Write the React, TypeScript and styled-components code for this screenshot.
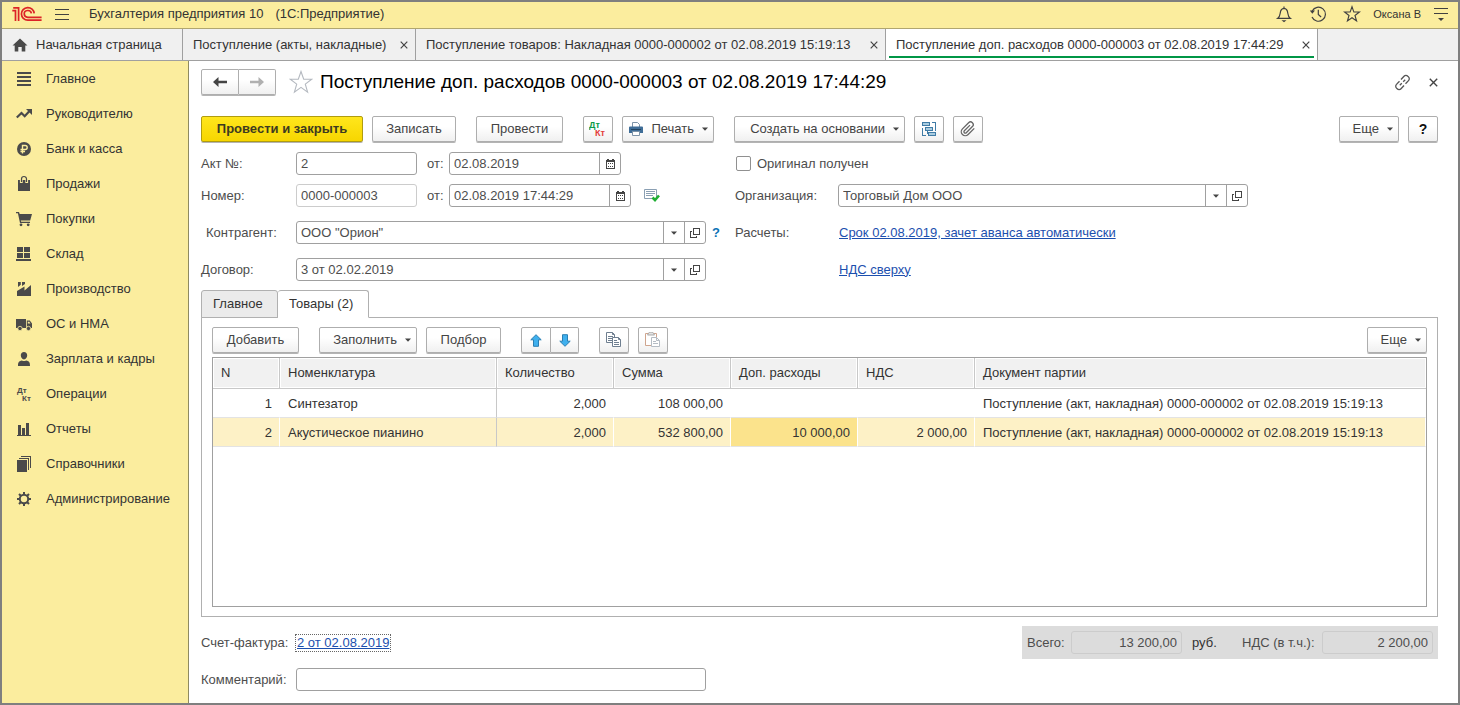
import React from 'react';
import styled, { createGlobalStyle, css } from 'styled-components';

const GlobalStyle = createGlobalStyle`
  *, *::before, *::after { box-sizing: border-box; }
  body {
    margin: 0;
    background: #fff;
    color: #333;
    font-family: 'Liberation Sans', Arial, sans-serif;
    font-size: 13px;
    line-height: 16px;
  }
  button, input { font: inherit; color: inherit; }
  svg { display: block; flex: none; }
`;

/* ---------- window frame ---------- */

const Window = styled.div`
  display: flex;
  flex-direction: column;
  min-height: 100vh;
  border: 2px solid #7f7f7f;
`;

const TitleBar = styled.header`
  display: flex;
  align-items: center;
  height: 27px;
  padding: 0 9px 2px 10px;
  background: #fbed9e;
  border-bottom: 1px solid #b0a670;
`;

const IconButton = styled.button`
  display: inline-flex;
  align-items: center;
  justify-content: center;
  flex: none;
  padding: 0;
  border: 0;
  background: transparent;
  color: #404040;
  cursor: pointer;
`;

const BurgerButton = styled(IconButton)`
  margin-left: 13px;
`;

const FavouriteButton = styled(IconButton)`
  margin-left: 13px;
`;

const AppTitle = styled.div`
  display: flex;
  gap: 12px;
  margin-left: 20px;
  flex: 1;
  white-space: nowrap;
`;

const TitleTools = styled.div`
  display: flex;
  align-items: center;
  gap: 16px;
`;

const UserLink = styled.button`
  margin-left: -4px;
  padding: 0;
  border: 0;
  background: transparent;
  font-size: 11px;
  white-space: nowrap;
`;

const MenuToggle = styled(IconButton)`
  margin-left: 12px;
`;

const TabStrip = styled.nav`
  display: flex;
  height: 32px;
  background: #f0f0f0;
  border-bottom: 1px solid #a0a0a0;
`;

const WindowTab = styled.div<{ $basis: number; $active?: boolean }>`
  display: flex;
  align-items: center;
  flex: 0 1 ${p => p.$basis}px;
  min-width: 0;
  position: relative;
  padding: 0 7px 0 10px;
  border-right: 1px solid #a0a0a0;
  background: ${p => (p.$active ? '#fff' : '#f0f0f0')};
  ${p =>
    p.$active &&
    css`
      &::after {
        content: '';
        position: absolute;
        left: 3px;
        right: 3px;
        bottom: 2px;
        height: 2px;
        background: #009646;
      }
    `}
`;

const TabText = styled.button`
  display: flex;
  align-items: center;
  gap: 8px;
  flex: 1;
  min-width: 0;
  padding: 0;
  border: 0;
  background: transparent;
  text-align: left;
  white-space: nowrap;
  overflow: hidden;
`;

const Body = styled.div`
  display: flex;
  flex: 1;
`;

const Sidebar = styled.nav`
  flex: none;
  width: 187px;
  background: #fbed9e;
  border-right: 1px solid #8f8a60;
`;

const SectionList = styled.ul`
  margin: 0;
  padding: 0;
  list-style: none;
`;

const SectionLink = styled.a`
  display: flex;
  align-items: center;
  gap: 12px;
  height: 35px;
  padding-left: 14px;
  color: #333;
  text-decoration: none;
`;

/* ---------- document form ---------- */

const Main = styled.main`
  display: flex;
  flex-direction: column;
  flex: 1;
  min-width: 0;
  padding: 8px 20px 12px 12px;
  color: #4d4d4d;
`;

const Heading = styled.div`
  display: flex;
  align-items: center;
  height: 26px;
  margin-bottom: 21px;
`;

const DocTitle = styled.h1`
  flex: 1;
  margin: 0 0 0 7px;
  color: #000;
  font-size: 19px;
  line-height: 24px;
  font-weight: 400;
  white-space: nowrap;
`;

const HeadingTools = styled.div`
  display: flex;
  gap: 18px;
`;

const Button = styled.button<{ $width: number; $primary?: boolean }>`
  display: inline-flex;
  align-items: center;
  justify-content: center;
  gap: 8px;
  flex: none;
  width: ${p => p.$width}px;
  height: 26px;
  margin-bottom: 1px;
  padding: 0;
  border: 1px solid #aeaeae;
  border-radius: 2px;
  background: linear-gradient(#fff 40%, #f0f0f0);
  box-shadow: 0 1px 0 #b4b4b4;
  color: #444;
  white-space: nowrap;
  cursor: pointer;
  &:disabled { color: #b0b0b0; }
  ${p =>
    p.$primary &&
    css`
      border-color: #b09c10;
      background: linear-gradient(#ffe61c, #f7d600);
      color: #3d3a20;
      font-weight: 700;
    `}
`;

const DropButton = styled(Button)`
  justify-content: flex-end;
  padding-right: 5px;
`;

const HelpButton = styled(Button)`
  color: #111;
  font-size: 14px;
  font-weight: 700;
`;

const Joined = styled.div`
  display: flex;
  & > button:first-child { border-radius: 2px 0 0 2px; }
  & > button:last-child { border-radius: 0 2px 2px 0; border-left: 0; }
`;

const Toolbar = styled.div`
  display: flex;
  gap: 9px;
`;

const ToolGroup = styled.div`
  display: flex;
  gap: 9px;
  margin-right: 11px;
  &:last-child { margin: 0 0 0 auto; }
`;

const Form = styled.div`
  display: grid;
  grid-template-columns: minmax(0, 534px) minmax(0, 513px);
  row-gap: 9px;
  margin: 9px 0;
`;

const FormRow = styled.div<{ $spaced?: boolean }>`
  display: flex;
  align-items: center;
  height: 23px;
  margin-top: ${p => (p.$spaced ? 5 : 0)}px;
`;

const Label = styled.label<{ $width: number; $indent?: boolean }>`
  flex: none;
  width: ${p => p.$width}px;
  padding-left: ${p => (p.$indent ? 5 : 0)}px;
  white-space: nowrap;
`;

const FieldBox = styled.div<{ $width: number; $muted?: boolean }>`
  display: flex;
  flex: 0 1 ${p => p.$width}px;
  min-width: 0;
  height: 23px;
  border: 1px solid ${p => (p.$muted ? '#cccccc' : '#a0a0a0')};
  border-radius: 3px;
  overflow: hidden;
`;

const TextInput = styled.input`
  flex: 1;
  width: 0;
  min-width: 0;
  height: 100%;
  padding: 0 4px;
  border: 0;
  outline: 0;
  background: transparent;
`;

const FieldButton = styled(IconButton)`
  width: 21px;
  border-left: 1px solid #a0a0a0;
`;

const DateLabel = styled(Label)`
  margin-left: 10px;
`;

const Note = styled.span`
  margin-left: 13px;
`;

const Hint = styled.button`
  margin-left: 6px;
  padding: 0;
  border: 0;
  background: transparent;
  color: #0b72b5;
  font-weight: 700;
`;

const Link = styled.a<{ $focused?: boolean }>`
  padding: 0 1px;
  color: #1c4fae;
  white-space: nowrap;
  outline: ${p => (p.$focused ? '1px dotted #666' : 'none')};
`;

const CheckLabel = styled.label`
  display: flex;
  align-items: center;
  gap: 6px;
  padding-left: 1px;
`;

const Checkbox = styled.input`
  appearance: none;
  width: 15px;
  height: 15px;
  margin: 0;
  border: 1px solid #909090;
  border-radius: 2px;
  background: #fff;
`;

/* ---------- tabbed table part ---------- */

const PageTabs = styled.div`
  display: flex;
  height: 28px;
  position: relative;
  z-index: 1;
  margin-bottom: -1px;
`;

const PageTab = styled.button<{ $width: number; $active?: boolean }>`
  width: ${p => p.$width}px;
  padding: 0 11px;
  border: 1px solid #b0b0b0;
  border-left-width: ${p => (p.$active ? 0 : 1)}px;
  border-bottom-color: ${p => (p.$active ? '#fff' : '#b0b0b0')};
  border-radius: 3px 3px 0 0;
  background: ${p => (p.$active ? '#fff' : '#ebebeb')};
  color: #333;
  text-align: left;
  white-space: nowrap;
`;

const Panel = styled.section`
  display: flex;
  flex-direction: column;
  flex: 1;
  padding: 9px 10px;
  border: 1px solid #b0b0b0;
`;

const TableFrame = styled.div`
  flex: 1;
  min-height: 120px;
  margin-top: 3px;
  border: 1px solid #a0a0a0;
  overflow-x: auto;
`;

const Table = styled.table`
  width: 100%;
  table-layout: fixed;
  border-collapse: separate;
  border-spacing: 0;
  color: #333;
`;

const HeadCell = styled.th<{ $width?: number }>`
  width: ${p => (p.$width ? `${p.$width}px` : 'auto')};
  height: 31px;
  padding: 0 8px;
  border-right: 1px solid #c8c8c8;
  border-bottom: 1px solid #c8c8c8;
  background: #f1f1f1;
  box-shadow: inset 0 0 0 1px #fff;
  font-weight: 400;
  text-align: left;
  white-space: nowrap;
  &:last-child { border-right: 0; }
`;

const Cell = styled.td<{ $right?: boolean; $divider?: boolean; $current?: boolean }>`
  height: 29px;
  padding: 2px 7px 0 8px;
  border-right: 1px solid ${p => (p.$divider ? '#c8c8c8' : '#fff')};
  border-bottom: 1px solid #e3e3e3;
  text-align: ${p => (p.$right ? 'right' : 'left')};
  white-space: nowrap;
  overflow: hidden;
  background: ${p => (p.$current ? '#fbe38c' : 'transparent')};
`;

const Row = styled.tr<{ $selected?: boolean }>`
  background: ${p => (p.$selected ? '#fdf1c6' : '#fff')};
`;

/* ---------- footer ---------- */

const Footer = styled.footer`
  display: grid;
  row-gap: 9px;
  margin-top: 9px;
`;

const FooterRow = styled.div`
  display: flex;
  align-items: center;
`;

const Totals = styled.div`
  display: flex;
  align-items: center;
  flex: none;
  width: 416px;
  height: 33px;
  margin-left: auto;
  padding: 0 5px;
  background: #dcdcdc;
`;

const TotalInput = styled(TextInput)`
  text-align: right;
`;

const Currency = styled.span`
  flex: none;
  width: 60px;
  padding-left: 10px;
  color: #333;
`;

/* ---------- icons ---------- */

const Logo = () => (
  <svg width="30" height="16" viewBox="0 0 30 16" fill="none" stroke="#dc2327" strokeWidth="1.7">
    <path d="M.3 4.6h3.2V15M1.2 1.9h5.4V15" />
    <path d="M22.2 7.4A6.4 6.3 0 1 0 15.8 14.2H29.6" />
    <path d="M19.4 7.4A3.6 3.4 0 1 0 15.8 11.3H29.6" />
  </svg>
);

const Burger = () => (
  <svg width="14" height="11" viewBox="0 0 14 11" fill="#404040" shapeRendering="crispEdges">
    <path d="M0 0h14v1H0zM0 5h14v1H0zM0 10h14v1H0z" />
  </svg>
);

const Bell = () => (
  <svg width="18" height="18" viewBox="0 0 18 18" fill="none" stroke="#404040" strokeWidth="1.2">
    <path d="M2.6 13.4h12.8c-1.6-1.2-2.3-2.3-2.6-5.2C12.5 5.2 11.5 3.6 9 3.4 6.5 3.6 5.5 5.2 5.2 8.2 4.9 11.1 4.2 12.2 2.6 13.4zM9 1.6v1.8" />
    <path d="M6.5 15.2h5L9 17.2z" fill="#404040" stroke="none" />
  </svg>
);

const History = () => (
  <svg width="18" height="18" viewBox="0 0 18 18" fill="none" stroke="#404040" strokeWidth="1.2">
    <path d="M3.2 6A7 7 0 1 1 3 12M9.3 4.8v4.6l2.8 2.6" />
    <path d="M.8 5.6h5.2L3.3 8.8z" fill="#404040" stroke="none" />
  </svg>
);

const starPath = 'M12 1.5l2.7 7.7h8l-6.4 4.9 2.3 8L12 17.4l-6.6 4.7 2.3-8L1.3 9.2h8z';

const SmallStar = () => (
  <svg width="18" height="18" viewBox="-1 -1 26 26" fill="none" stroke="#404040" strokeWidth="1.6">
    <path d={starPath} />
  </svg>
);

const LargeStar = () => (
  <svg width="24" height="24" viewBox="0 0 24 24" fill="none" stroke="#b4b9c0" strokeWidth="1.1">
    <path d={starPath} />
  </svg>
);

const ServiceMenu = () => (
  <svg width="16" height="14" viewBox="0 0 16 14" fill="#404040" shapeRendering="crispEdges">
    <path d="M1 1h14v1H1zM1 6h14v1H1z" />
    <path d="M5 11h6l-3 3z" shapeRendering="auto" />
  </svg>
);

const Cross = ({ size = 8 }: { size?: number }) => (
  <svg width={size} height={size} viewBox="0 0 8 8" stroke="#444" strokeWidth="1.2">
    <path d="M.7.7l6.600 6.600M7.300.7L.7 7.300" />
  </svg>
);

const Home = () => (
  <svg width="16" height="14" viewBox="0 0 16 14" fill="#4a4a4a">
    <path d="M8 .5L15.5 7.5H13.3V13.5H9.700V9H6.300V13.5H2.700V7.5H.5z" />
  </svg>
);

const Arrow = ({ right }: { right?: boolean }) => (
  <svg width="14" height="12" viewBox="0 0 14 12" fill={right ? '#b0b0b0' : '#444'}>
    <path d={right ? 'M14 6L8.5 1v3.800H0v2.400h8.500V11z' : 'M0 6l5.500-5v3.800H14v2.400H5.500V11z'} />
  </svg>
);

const ChainLink = () => (
  <svg width="17" height="17" viewBox="0 0 17 17" fill="none" stroke="#555" strokeWidth="1.3">
    <path d="M7 5.500l3-3.300a2.600 2.600 0 0 1 3.800 0l.7.7a2.600 2.600 0 0 1 0 3.700L11.500 9.800" />
    <path d="M10 11.500l-3 3.300a2.600 2.600 0 0 1-3.800 0l-.7-.7a2.600 2.600 0 0 1 0-3.700L5.500 7.200" />
    <path d="M5.800 11.200l2-2M9.200 7.800l2-2" />
  </svg>
);

const Caret = () => (
  <svg width="6" height="4" viewBox="0 0 6 4" fill="#444">
    <path d="M0 .5h6L3 3.700z" />
  </svg>
);

const Calendar = () => (
  <svg width="9" height="10" viewBox="0 0 9 10" fill="#444" shapeRendering="crispEdges">
    <path d="M0 1h1V0h2v1h3V0h2v1h1v9H0zM1 3v6h7V3z" fillRule="evenodd" />
    <path d="M2 4h1v1H2zM4 4h1v1H4zM6 4h1v1H6zM2 7h1v1H2zM4 7h1v1H4zM6 7h1v1H6z" />
  </svg>
);

const OpenIcon = () => (
  <svg width="10" height="10" viewBox="0 0 10 10" fill="none" stroke="#444" shapeRendering="crispEdges">
    <path d="M3.500.5h6v6h-6zM2 3.500H.5v6h6V8" />
  </svg>
);

const DtKt = () => (
  <svg width="18" height="18" viewBox="0 0 18 18" fontFamily="Liberation Sans, sans-serif" fontWeight="700" fontSize="8" fill="#4a4a4a">
    <text x="1" y="8">Дт</text>
    <text x="6" y="16">Кт</text>
  </svg>
);

const DtKtColor = () => (
  <svg width="18" height="18" viewBox="0 0 18 18" fontFamily="Liberation Sans, sans-serif" fontWeight="700" fontSize="9">
    <text x="0" y="8" fill="#0a9a48">Дт</text>
    <text x="6" y="16" fill="#e33b3b">Кт</text>
  </svg>
);

const Printer = () => (
  <svg width="14" height="14" viewBox="0 0 14 14">
    <path d="M3.500 5V.5h5l2 2V5" fill="#fff" stroke="#7d93a8" />
    <path d="M1 4.500h12a1 1 0 0 1 1 1V11H0V5.500a1 1 0 0 1 1-1z" fill="#3f6d97" />
    <path d="M2 7.500h10" stroke="#23435f" />
    <path d="M3.500 9.500h7v4h-7z" fill="#fff" stroke="#7d93a8" />
  </svg>
);

const Structure = () => (
  <svg width="15" height="15" viewBox="0 0 15 15" fill="#a9cce0" stroke="#3f7ba6" shapeRendering="crispEdges">
    <path d="M.5.5h7v3h-7zM3.500 5.500h7v3h-7zM6.500 10.500h7v3h-7z" />
    <path d="M10 .5h3.500V9M.5 6v7.500H4M5.500 9v2.500H6" fill="none" />
  </svg>
);

const Clip = () => (
  <svg width="16" height="16" viewBox="0 0 24 24" fill="none" stroke="#666" strokeWidth="2">
    <path d="M21.400 11.100l-9.200 9.200a6 6 0 0 1-8.500-8.500l9.200-9.200a4 4 0 0 1 5.700 5.700l-9.200 9.200a2 2 0 0 1-2.900-2.900l8.500-8.400" />
  </svg>
);

const PostedIcon = () => (
  <svg width="16" height="13" viewBox="0 0 16 13" fill="none">
    <path d="M.5.5h12v9H.5z" fill="#fff" stroke="#8a9fb3" />
    <path d="M2 2.500h9M2 4.500h9M2 6.500h7" stroke="#8a9fb3" />
    <path d="M8.500 8.500l2.500 2.500 4-4.500" stroke="#1fae33" strokeWidth="2.600" />
  </svg>
);

const BlueArrow = ({ down }: { down?: boolean }) => (
  <svg width="12" height="13" viewBox="0 0 12 13" fill="#3fb0ee" stroke="#2b7fb3">
    <path d={down ? 'M6 12.300L.8 7.200h2.700V.7h5v6.500h2.700z' : 'M6 .7L.8 5.800h2.700v6.500h5V5.800h2.700z'} />
  </svg>
);

const CopyIcon = () => (
  <svg width="16" height="16" viewBox="0 0 16 16" fill="#fff" stroke="#6f7f90">
    <path d="M.5.5h6l2 2v8h-8zM6.500.5v2h2M2 4.500h5M2 6.500h5M2 8.500h5" />
    <path d="M6.500 5.500h6l2 2v7h-8zM12.500 5.500v2h2M8 8.500h3M8 10.500h5M8 12.500h5" />
  </svg>
);

const PasteIcon = () => (
  <svg width="16" height="16" viewBox="0 0 16 16" fill="#fff" stroke="#b5bcc4">
    <path d="M.5 1.500h11v12H.5z" stroke="#cfa58e" />
    <path d="M3.500 1.500a2.500 1.500 0 0 1 5 0l1 1.500h-7z" fill="#e3e3e3" stroke="#aaa" />
    <path d="M6.500 5.500h5l3 3v6h-8zM11.500 5.500v3h3M8 9.500h3M8 11.500h5" />
  </svg>
);

const sectionShapes: Record<string, React.ReactNode> = {
  main: <path d="M1 2h14v2H1zM1 6h14v2H1zM1 10h14v2H1zM1 14h14v2H1z" shapeRendering="crispEdges" />,
  trend: (
    <>
      <path d="M.8 12.500L5.500 8l3.200 3.200 4.800-5.200" fill="none" stroke="#4a4a4a" strokeWidth="2.200" />
      <path d="M10 4h6v6z" />
    </>
  ),
  bank: (
    <>
      <circle cx="8" cy="9" r="7" />
      <path d="M6.500 13.500V5.500h2.700a2 2 0 0 1 0 4H4.500M4.500 11.500H9" fill="none" stroke="#fbed9e" strokeWidth="1.400" />
    </>
  ),
  bag: (
    <>
      <path d="M2 5h12v11H2z" />
      <path d="M5.300 8V4.300a2.700 2.700 0 0 1 5.400 0V8" fill="none" stroke="#fbed9e" strokeWidth="2.800" />
      <path d="M5.500 7V4a2.500 2.500 0 0 1 5 0V7" fill="none" stroke="#4a4a4a" strokeWidth="1.200" />
    </>
  ),
  cart: (
    <>
      <path d="M0 2h3l.7 2H16l-1.800 6.500H4.800l.4 1.300H14V13H4L1.900 3.300H0z" />
      <circle cx="5" cy="14.800" r="1.400" />
      <circle cx="12.200" cy="14.800" r="1.400" />
    </>
  ),
  warehouse: <path d="M1 2h6v5H1zM8 2h6v5H8zM1 8h6v5H1zM8 8h6v5H8zM0 14h15v2H0z" shapeRendering="crispEdges" />,
  factory: <path d="M1 16V11l7.500-4.500V10.500L15 5V16zM2 2h2.800v2.800L2 7zM6 2h3v2L6 6z" />,
  truck: (
    <>
      <path d="M0 4h10v9H0zM10.800 5.500h3L16 8.500V13h-5.200z" />
      <circle cx="4" cy="13.500" r="2.200" stroke="#fbed9e" strokeWidth=".8" />
      <circle cx="12.500" cy="13.500" r="2.200" stroke="#fbed9e" strokeWidth=".8" />
      <path d="M11.800 6.800h1.500l1.200 1.800h-2.700z" fill="#fbed9e" />
    </>
  ),
  person: <path d="M8 2c2 0 3.200 1.400 3.200 3.300 0 2-1.300 4.200-3.200 4.200S4.800 7.300 4.800 5.300C4.800 3.400 6 2 8 2zM2 16c0-3.500.5-4.800 4-5.500.9.800 3.100.8 4 0 3.500.7 4 2 4 5.500z" />,
  bars: <path d="M1 15h14v1H1zM2 5h3v10H2zM6 8h3v7H6zM10 3h3v12h-3z" shapeRendering="crispEdges" />,
  books: <path d="M1 5h10v12H1zM3 3h10v12h-1V4H3zM5 1h10v12h-1V2H5z" shapeRendering="crispEdges" />,
  gear: (
    <>
      <circle cx="8" cy="9" r="4.200" fill="none" stroke="#4a4a4a" strokeWidth="2" />
      <path
        d="M8 2v3M8 13v3M1 9h3M12 9h3M3 4l2.300 2.300M10.700 11.700L13 14M13 4l-2.300 2.300M5.300 11.700L3 14"
        stroke="#4a4a4a"
        strokeWidth="2"
      />
    </>
  ),
};

const SectionIcon = ({ name }: { name: string }) =>
  name === 'dtkt' ? (
    <DtKt />
  ) : (
    <svg width="18" height="18" viewBox="0 0 18 18" fill="#4a4a4a">
      {sectionShapes[name]}
    </svg>
  );

/* ---------- data ---------- */

const sections = [
  ['main', 'Главное'],
  ['trend', 'Руководителю'],
  ['bank', 'Банк и касса'],
  ['bag', 'Продажи'],
  ['cart', 'Покупки'],
  ['warehouse', 'Склад'],
  ['factory', 'Производство'],
  ['truck', 'ОС и НМА'],
  ['person', 'Зарплата и кадры'],
  ['dtkt', 'Операции'],
  ['bars', 'Отчеты'],
  ['books', 'Справочники'],
  ['gear', 'Администрирование'],
];

const windowTabs = [
  { text: 'Поступление (акты, накладные)', basis: 233 },
  { text: 'Поступление товаров: Накладная 0000-000002 от 02.08.2019 15:19:13', basis: 470 },
  { text: 'Поступление доп. расходов 0000-000003 от 02.08.2019 17:44:29', basis: 432, active: true },
];

const columns: [string, number?][] = [
  ['N', 67],
  ['Номенклатура', 217],
  ['Количество', 117],
  ['Сумма', 117],
  ['Доп. расходы', 127],
  ['НДС', 117],
  ['Документ партии'],
];

const goods = [
  ['1', 'Синтезатор', '2,000', '108 000,00', '', '', 'Поступление (акт, накладная) 0000-000002 от 02.08.2019 15:19:13'],
  ['2', 'Акустическое пианино', '2,000', '532 800,00', '10 000,00', '2 000,00', 'Поступление (акт, накладная) 0000-000002 от 02.08.2019 15:19:13'],
];

/* ---------- composed fields ---------- */

const DateField = ({ id, value, width }: { id: string; value: string; width: number }) => (
  <FieldBox $width={width}>
    <TextInput id={id} defaultValue={value} />
    <FieldButton aria-label="Выбрать дату"><Calendar /></FieldButton>
  </FieldBox>
);

const LookupField = ({ id, value }: { id: string; value: string }) => (
  <FieldBox $width={410}>
    <TextInput id={id} defaultValue={value} />
    <FieldButton aria-label="Выбрать"><Caret /></FieldButton>
    <FieldButton aria-label="Открыть"><OpenIcon /></FieldButton>
  </FieldBox>
);

export default function App() {
  return (
    <>
      <GlobalStyle />
      <Window>
        <TitleBar>
          <Logo />
          <BurgerButton aria-label="Главное меню"><Burger /></BurgerButton>
          <AppTitle>
            <span>Бухгалтерия предприятия 10</span>
            <span>(1С:Предприятие)</span>
          </AppTitle>
          <TitleTools>
            <IconButton aria-label="Уведомления"><Bell /></IconButton>
            <IconButton aria-label="История"><History /></IconButton>
            <IconButton aria-label="Избранное"><SmallStar /></IconButton>
            <UserLink>Оксана В</UserLink>
          </TitleTools>
          <MenuToggle aria-label="Сервис"><ServiceMenu /></MenuToggle>
        </TitleBar>

        <TabStrip>
          <WindowTab $basis={181}>
            <TabText><Home />Начальная страница</TabText>
          </WindowTab>
          {windowTabs.map(tab => (
            <WindowTab key={tab.text} $basis={tab.basis} $active={tab.active}>
              <TabText>{tab.text}</TabText>
              <IconButton aria-label="Закрыть вкладку"><Cross /></IconButton>
            </WindowTab>
          ))}
        </TabStrip>

        <Body>
          <Sidebar>
            <SectionList>
              {sections.map(([icon, name]) => (
                <li key={name}>
                  <SectionLink href="#"><SectionIcon name={icon} />{name}</SectionLink>
                </li>
              ))}
            </SectionList>
          </Sidebar>

          <Main>
            <Heading>
              <Joined>
                <Button $width={38} aria-label="Назад"><Arrow /></Button>
                <Button $width={37} aria-label="Вперед" disabled><Arrow right /></Button>
              </Joined>
              <FavouriteButton aria-label="В избранное"><LargeStar /></FavouriteButton>
              <DocTitle>Поступление доп. расходов 0000-000003 от 02.08.2019 17:44:29</DocTitle>
              <HeadingTools>
                <IconButton aria-label="Получить ссылку"><ChainLink /></IconButton>
                <IconButton aria-label="Закрыть"><Cross size={9} /></IconButton>
              </HeadingTools>
            </Heading>

            <Toolbar>
              <ToolGroup>
                <Button $width={162} $primary>Провести и закрыть</Button>
                <Button $width={84}>Записать</Button>
              </ToolGroup>
              <ToolGroup>
                <Button $width={87}>Провести</Button>
              </ToolGroup>
              <ToolGroup>
                <Button $width={30} aria-label="Дт Кт"><DtKtColor /></Button>
                <DropButton $width={92}><Printer />Печать<Caret /></DropButton>
              </ToolGroup>
              <ToolGroup>
                <DropButton $width={171}>Создать на основании<Caret /></DropButton>
                <Button $width={30} aria-label="Структура подчиненности"><Structure /></Button>
                <Button $width={30} aria-label="Файлы"><Clip /></Button>
              </ToolGroup>
              <ToolGroup>
                <DropButton $width={60}>Еще<Caret /></DropButton>
                <HelpButton $width={30}>?</HelpButton>
              </ToolGroup>
            </Toolbar>

            <Form>
              <FormRow>
                <Label $width={95} htmlFor="act">Акт №:</Label>
                <FieldBox $width={121}><TextInput id="act" defaultValue="2" /></FieldBox>
                <DateLabel $width={22} htmlFor="actDate">от:</DateLabel>
                <DateField id="actDate" value="02.08.2019" width={172} />
              </FormRow>
              <FormRow>
                <CheckLabel><Checkbox type="checkbox" />Оригинал получен</CheckLabel>
              </FormRow>
              <FormRow>
                <Label $width={95} htmlFor="number">Номер:</Label>
                <FieldBox $width={121} $muted><TextInput id="number" defaultValue="0000-000003" /></FieldBox>
                <DateLabel $width={22} htmlFor="docDate">от:</DateLabel>
                <DateField id="docDate" value="02.08.2019 17:44:29" width={182} />
                <Note><PostedIcon /></Note>
              </FormRow>
              <FormRow>
                <Label $width={103} htmlFor="org">Организация:</Label>
                <LookupField id="org" value="Торговый Дом ООО" />
              </FormRow>
              <FormRow $spaced>
                <Label $width={95} $indent htmlFor="partner">Контрагент:</Label>
                <LookupField id="partner" value={'ООО "Орион"'} />
                <Hint>?</Hint>
              </FormRow>
              <FormRow $spaced>
                <Label as="span" $width={103}>Расчеты:</Label>
                <Link href="#">Срок 02.08.2019, зачет аванса автоматически</Link>
              </FormRow>
              <FormRow $spaced>
                <Label $width={95} htmlFor="contract">Договор:</Label>
                <LookupField id="contract" value="3 от 02.02.2019" />
              </FormRow>
              <FormRow $spaced>
                <Label as="span" $width={103} />
                <Link href="#">НДС сверху</Link>
              </FormRow>
            </Form>

            <PageTabs role="tablist">
              <PageTab role="tab" $width={77}>Главное</PageTab>
              <PageTab role="tab" $width={91} $active aria-selected>Товары (2)</PageTab>
            </PageTabs>
            <Panel>
              <Toolbar>
                <ToolGroup><Button $width={87}>Добавить</Button></ToolGroup>
                <ToolGroup>
                  <DropButton $width={98}>Заполнить<Caret /></DropButton>
                  <Button $width={75}>Подбор</Button>
                </ToolGroup>
                <ToolGroup>
                  <Joined>
                    <Button $width={30} aria-label="Вверх"><BlueArrow /></Button>
                    <Button $width={28} aria-label="Вниз"><BlueArrow down /></Button>
                  </Joined>
                </ToolGroup>
                <ToolGroup>
                  <Button $width={30} aria-label="Копировать"><CopyIcon /></Button>
                  <Button $width={30} aria-label="Вставить" disabled><PasteIcon /></Button>
                </ToolGroup>
                <ToolGroup><DropButton $width={60}>Еще<Caret /></DropButton></ToolGroup>
              </Toolbar>
              <TableFrame>
                <Table>
                  <thead>
                    <tr>
                      {columns.map(([name, width]) => (
                        <HeadCell key={name} $width={width}>{name}</HeadCell>
                      ))}
                    </tr>
                  </thead>
                  <tbody>
                    {goods.map((row, r) => (
                      <Row key={row[0]} $selected={r === 1}>
                        {row.map((value, c) => (
                          <Cell key={c} $right={c !== 1 && c !== 6} $divider={c === 1} $current={r === 1 && c === 4}>
                            {value}
                          </Cell>
                        ))}
                      </Row>
                    ))}
                  </tbody>
                </Table>
              </TableFrame>
            </Panel>

            <Footer>
              <FooterRow>
                <Label as="span" $width={95}>Счет-фактура:</Label>
                <Link href="#" $focused>2 от 02.08.2019</Link>
                <Totals>
                  <Label $width={44} htmlFor="total">Всего:</Label>
                  <FieldBox $width={111} $muted><TotalInput id="total" readOnly value="13 200,00" /></FieldBox>
                  <Currency>руб.</Currency>
                  <Label $width={80} htmlFor="vat">НДС (в т.ч.):</Label>
                  <FieldBox $width={111} $muted><TotalInput id="vat" readOnly value="2 200,00" /></FieldBox>
                </Totals>
              </FooterRow>
              <FooterRow>
                <Label $width={95} htmlFor="comment">Комментарий:</Label>
                <FieldBox $width={410}><TextInput id="comment" /></FieldBox>
              </FooterRow>
            </Footer>
          </Main>
        </Body>
      </Window>
    </>
  );
}
